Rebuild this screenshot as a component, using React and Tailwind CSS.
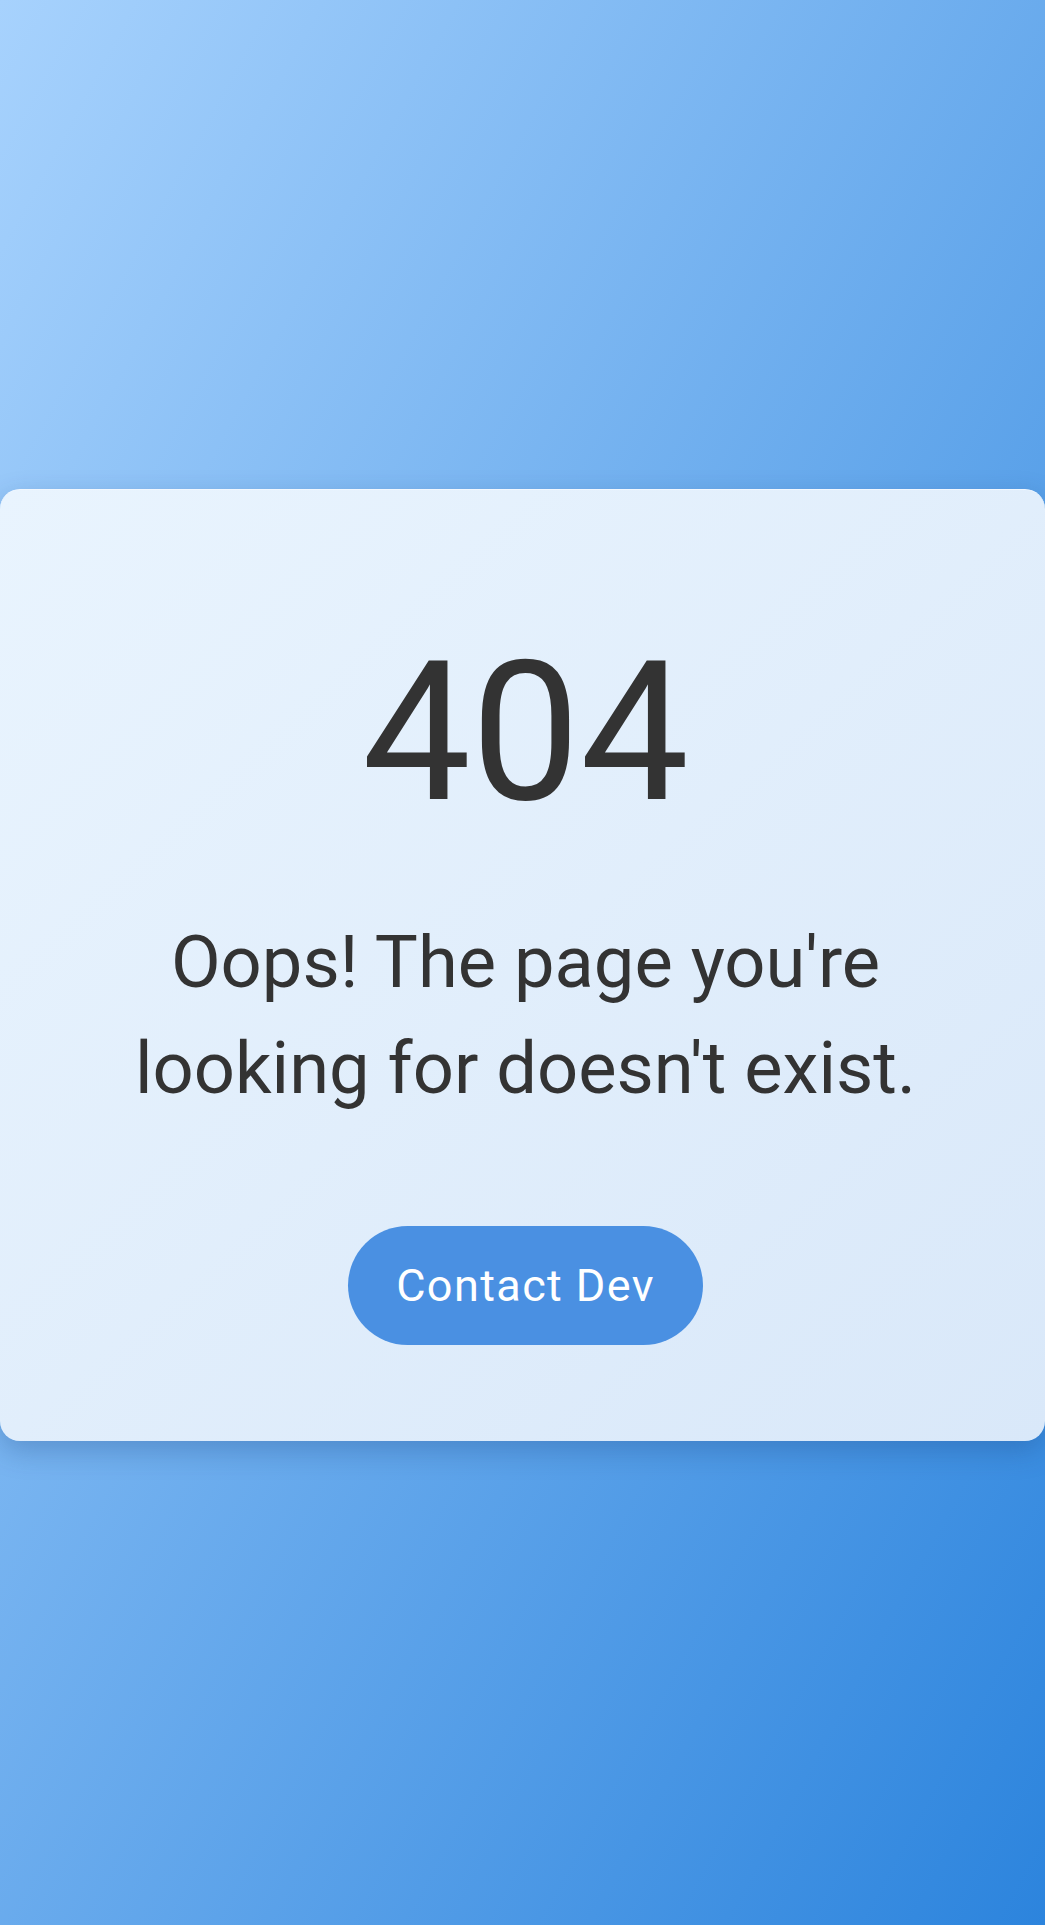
export default function App() {
    return (
        <div
            className="min-h-[1925px] w-full flex items-center justify-center bg-[linear-gradient(to_bottom_right,#a7d2fd,#2c84dd)]"
            style={{ fontFamily: 'Roboto, "Noto Sans", sans-serif' }}
        >
            {/* Card */}
            <div className="w-full mt-[4px] rounded-[20px] bg-[linear-gradient(to_bottom_right,#e9f4fe,#d9e8f9)] border-t border-[#f2f8ff] shadow-[0_10px_28px_rgba(20,60,120,0.28)] pl-[106px] pr-[100px] pt-[146px] pb-[96px] flex flex-col items-center text-center">
                <h1 className="text-[194px] leading-none font-normal text-[#333333]">404</h1>
                <p className="mt-[80px] text-[72.25px] leading-[106px] text-[#333333]">
                    Oops! The page you're looking for doesn't exist.
                </p>
                <button className="mt-[104px] h-[119px] w-[355px] rounded-full bg-[#4a90e2] text-white text-[45px] tracking-[1.4px] leading-none flex items-center justify-center">
                    Contact Dev
                </button>
            </div>
        </div>
    );
}
